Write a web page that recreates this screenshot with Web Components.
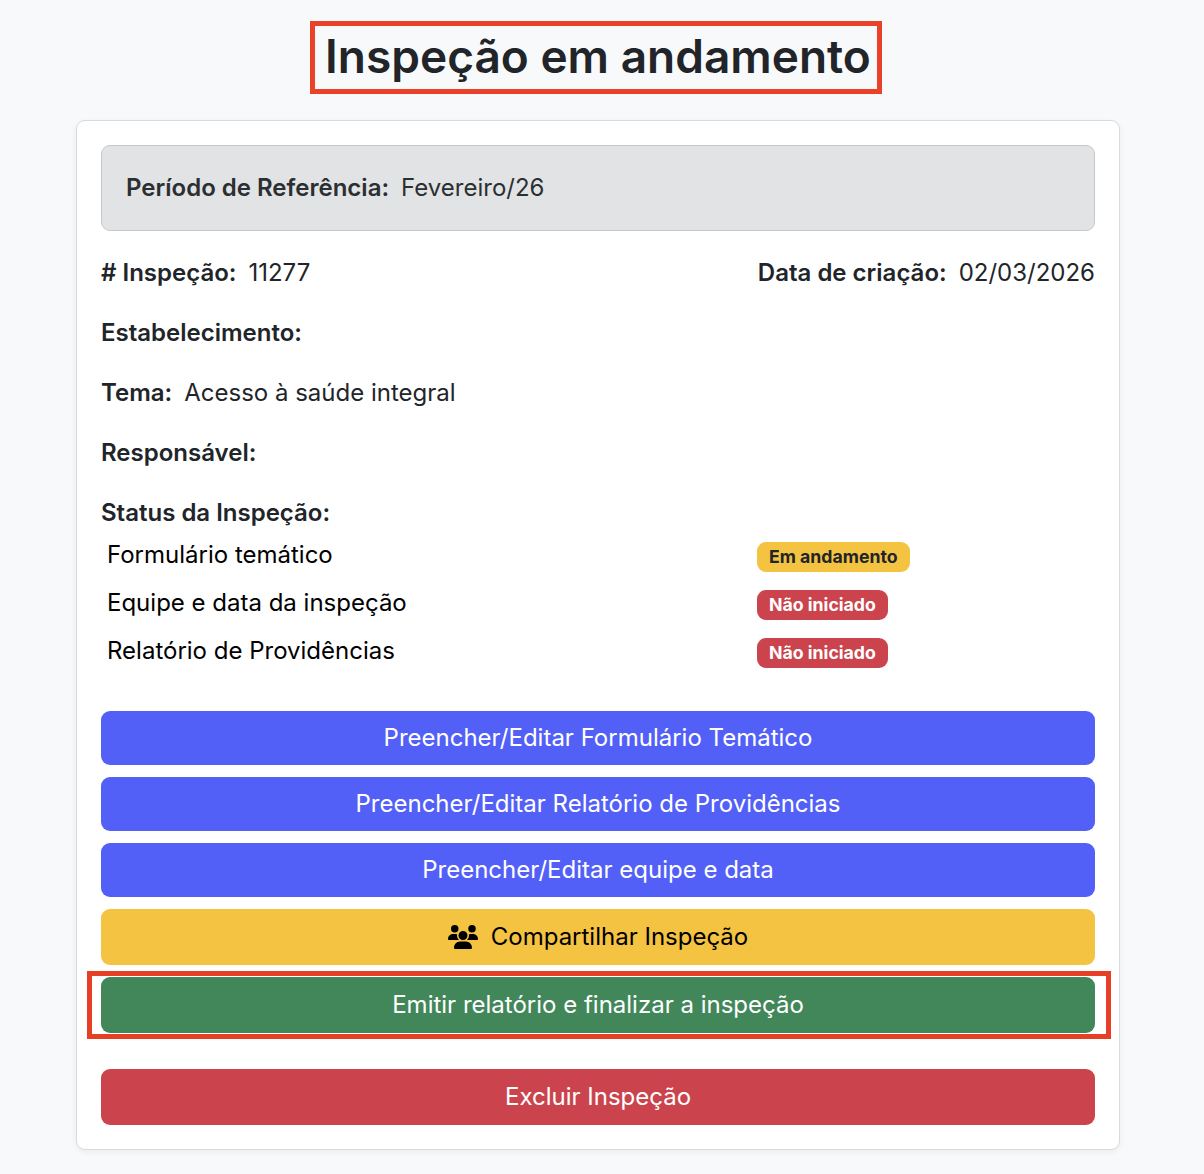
<!DOCTYPE html>
<html lang="pt-BR">
<head>
<meta charset="utf-8">
<title>Inspeção em andamento</title>
<style>
  html, body { margin: 0; background: #f8f9fa; }
  body { font-family: Inter, "Liberation Sans", sans-serif; font-size: 24px; line-height: 36px; color: #212529; }
</style>
</head>
<body>
<insp-page>
  <insp-title>Inspeção em andamento</insp-title>
  <insp-card>
    <insp-alert label="Período de Referência:">Fevereiro/26</insp-alert>
    <insp-split>
      <insp-field label="# Inspeção:">11277</insp-field>
      <insp-field label="Data de criação:" slot="end">02/03/2026</insp-field>
    </insp-split>
    <insp-field label="Estabelecimento:"></insp-field>
    <insp-field label="Tema:">Acesso à saúde integral</insp-field>
    <insp-field label="Responsável:"></insp-field>
    <insp-field label="Status da Inspeção:" tight></insp-field>
    <insp-status>
      <insp-status-row>Formulário temático<insp-badge slot="badge" tone="warning">Em andamento</insp-badge></insp-status-row>
      <insp-status-row>Equipe e data da inspeção<insp-badge slot="badge" tone="danger">Não iniciado</insp-badge></insp-status-row>
      <insp-status-row>Relatório de Providências<insp-badge slot="badge" tone="danger">Não iniciado</insp-badge></insp-status-row>
    </insp-status>
    <insp-actions>
      <insp-button tone="primary">Preencher/Editar Formulário Temático</insp-button>
      <insp-button tone="primary">Preencher/Editar Relatório de Providências</insp-button>
      <insp-button tone="primary">Preencher/Editar equipe e data</insp-button>
      <insp-button tone="warning" tall>
        <svg slot="icon" width="30" height="24" viewBox="0 0 640 512" fill="currentColor"><path d="M144 0a80 80 0 1 1 0 160A80 80 0 1 1 144 0zM512 0a80 80 0 1 1 0 160A80 80 0 1 1 512 0zM0 298.7C0 239.8 47.8 192 106.7 192h42.7c15.9 0 31 3.5 44.6 9.7c-1.3 7.2-1.9 14.7-1.9 22.3c0 38.2 16.8 72.5 43.3 96c-.2 0-.4 0-.7 0H21.3C9.6 320 0 310.4 0 298.7zM405.3 320c-.2 0-.4 0-.7 0c26.6-23.5 43.3-57.8 43.3-96c0-7.6-.7-15-1.9-22.3c13.6-6.3 28.7-9.7 44.6-9.7h42.7C592.2 192 640 239.8 640 298.7c0 11.8-9.6 21.3-21.3 21.3H405.3zM224 224a96 96 0 1 1 192 0 96 96 0 1 1 -192 0zM128 485.3C128 411.7 187.7 352 261.3 352H378.7C452.3 352 512 411.7 512 485.3c0 14.7-11.9 26.7-26.7 26.7H154.7c-14.7 0-26.7-11.9-26.7-26.7z"/></svg>
        Compartilhar Inspeção
      </insp-button>
      <insp-button tone="success" tall marked>Emitir relatório e finalizar a inspeção</insp-button>
      <insp-button tone="danger" tall apart>Excluir Inspeção</insp-button>
    </insp-actions>
  </insp-card>
</insp-page>

<script>
// helper: cada componente so declara o seu markup e estilos
function define(name, html) {
  customElements.define(name, class extends HTMLElement {
    constructor() {
      super();
      this.attachShadow({ mode: "open" });
      this.shadowRoot.innerHTML = html;
    }
    connectedCallback() {
      const label = this.shadowRoot.querySelector("[data-label]");
      if (label) label.textContent = this.getAttribute("label") || "";
    }
  });
}

define("insp-page", `
  <style>:host { display: block; width: 1044px; margin-left: 76px; padding: 21px 0 24px; }</style>
  <slot></slot>`);

define("insp-title", `
  <style>
    :host { display: block; margin-bottom: 26px; }
    h1 { position: relative; width: max-content; margin: 0 auto; padding: 4px 0 6px; font-size: 46px; line-height: 63px; font-weight: 600; color: #212529; }
    h1::after { content: ""; position: absolute; inset: 0 -11px 0 -15px; border: 5px solid #ea4128; box-sizing: border-box; }
  </style>
  <h1><slot></slot></h1>`);

define("insp-card", `
  <style>
    :host { display: block; box-sizing: border-box; padding: 24px; background: #fff; border: 1px solid #d9dadb; border-radius: 9px; box-shadow: 0 2px 6px rgba(0,0,0,.06); }
  </style>
  <slot></slot>`);

define("insp-alert", `
  <style>
    :host { display: block; padding: 24px; margin-bottom: 24px; background: #e2e3e5; border: 1px solid #c4c8cb; border-radius: 9px; color: #2b2f32; }
    b { font-weight: 600; margin-right: 12px; }
  </style>
  <b data-label></b><slot></slot>`);

define("insp-split", `
  <style>:host { display: flex; justify-content: space-between; }</style>
  <slot></slot><slot name="end"></slot>`);

define("insp-field", `
  <style>
    :host { display: block; margin-bottom: 24px; }
    :host([tight]) { margin-bottom: 6px; }
    b { font-weight: 600; margin-right: 12px; }
  </style>
  <b data-label></b><slot></slot>`);

define("insp-status", `
  <style>:host { display: flex; flex-direction: column; gap: 12px; margin-bottom: 42px; }</style>
  <slot></slot>`);

define("insp-status-row", `
  <style>
    :host { display: grid; grid-template-columns: 650px auto; justify-content: start; align-items: center; padding-left: 6px; color: #000; }
    .b { display: flex; padding-top: 4px; }
  </style>
  <div><slot></slot></div><div class="b"><slot name="badge"></slot></div>`);

define("insp-badge", `
  <style>
    :host { display: inline-block; padding: 6px 12px; border-radius: 9px; font-size: 17.7px; line-height: 18px; font-weight: 700; }
    :host([tone=warning]) { background: #f5c342; color: #212529; }
    :host([tone=danger]) { background: #cb444d; color: #fff; }
  </style>
  <slot></slot>`);

define("insp-actions", `
  <style>:host { display: flex; flex-direction: column; gap: 12px; }</style>
  <slot></slot>`);

define("insp-button", `
  <style>
    :host { display: flex; position: relative; justify-content: center; align-items: center; gap: 13px; height: 54px; border-radius: 9px; text-align: center; }
    :host([tall]) { height: 56px; }
    :host([apart]) { margin-top: 24px; }
    :host([tone=primary]) { background: #5360f8; color: #fff; }
    :host([tone=warning]) { background: #f5c342; color: #000; }
    :host([tone=success]) { background: #41875a; color: #fff; }
    :host([tone=danger]) { background: #cb444d; color: #fff; }
    :host([marked])::after { content: ""; position: absolute; inset: -6px -16px -6px -14px; border: 5px solid #e63f26; box-sizing: border-box; }
    ::slotted(svg) { display: block; }
  </style>
  <slot name="icon"></slot><span><slot></slot></span>`);
</script>
</body>
</html>
